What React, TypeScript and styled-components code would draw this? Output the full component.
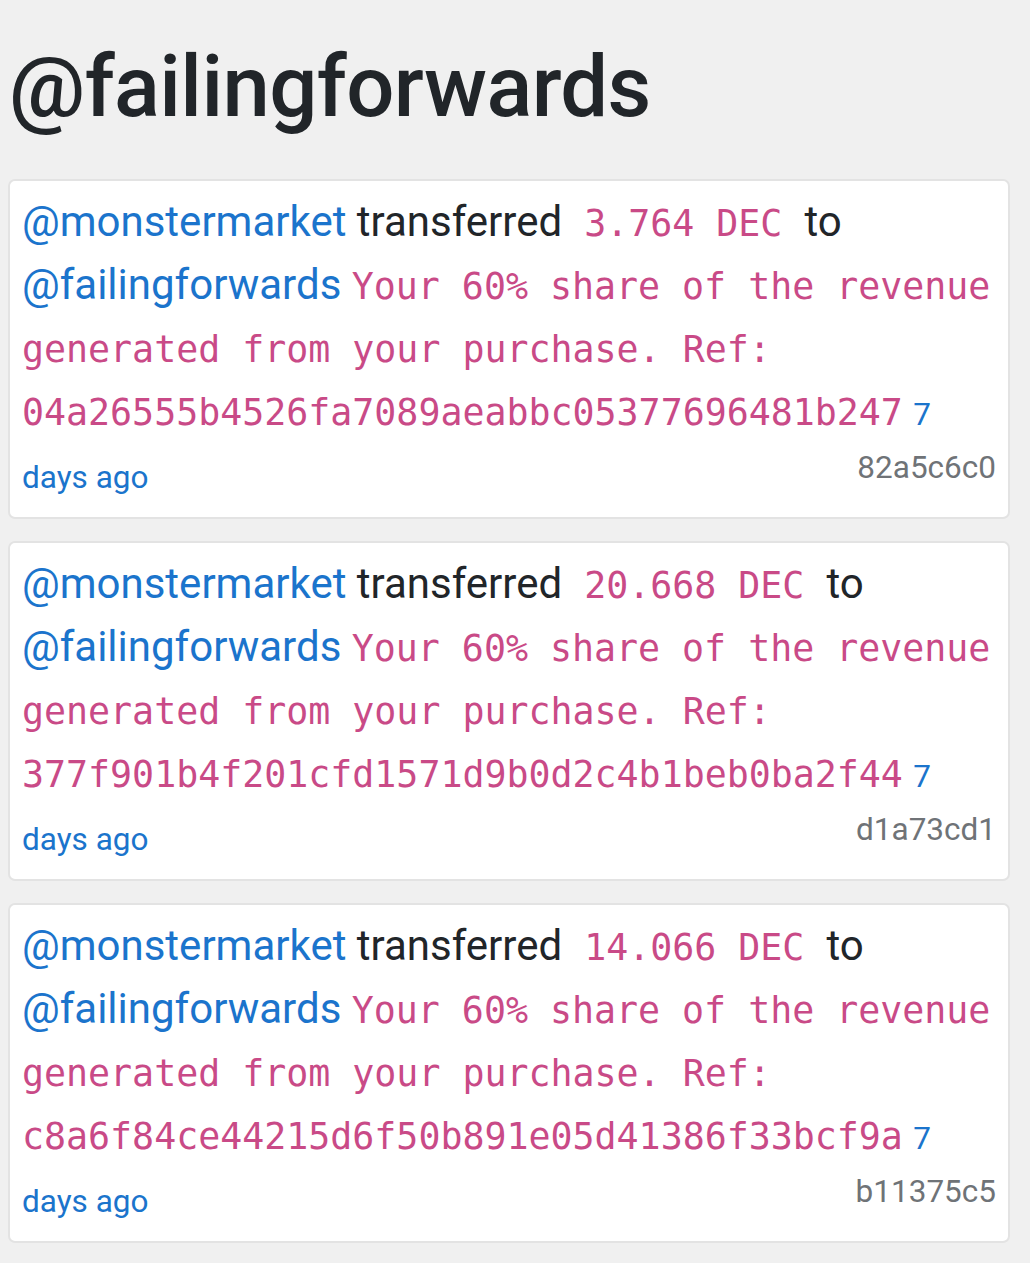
import React from "react";
import styled, { createGlobalStyle } from "styled-components";

const Global = createGlobalStyle`
  html, body { margin: 0; padding: 0; background: #f0f0f0; }
  body {
    font-family: Roboto, "Liberation Sans", sans-serif;
    font-size: 42px;
    line-height: 1.5;
    color: #212529;
  }
`;

const Page = styled.main`
  padding: 0 20px 20px 8px;
`;

const Title = styled.h1`
  margin: 36px 0 41px 1px;
  font-size: 85px;
  font-weight: 500;
  line-height: 1.2;
  color: #212529;
  letter-spacing: -0.6px;
`;

const List = styled.div`
  display: flex;
  flex-direction: column;
  gap: 22px;
`;

const Card = styled.div`
  background: #fff;
  border: 2px solid #e3e3e3;
  border-radius: 7px;
  padding: 9px 12px 12px 12px;
`;

const Body = styled.p`
  margin: 0;
`;

const Link = styled.a<{ $small?: boolean }>`
  color: #1b74cc;
  text-decoration: none;
  font-size: ${(p) => (p.$small ? "31.5px" : "inherit")};
`;

const Code = styled.code`
  font-family: "DejaVu Sans Mono", "Liberation Mono", monospace;
  font-size: 36.6px;
  color: #c94a87;
  white-space: pre-wrap;
`;

const Hash = styled.span`
  float: right;
  font-size: 31.5px;
  color: #6f7377;
  margin-top: 2px;
`;

type Tx = { amount: string; ref: string; id: string };

const txs: Tx[] = [
  { amount: "3.764", ref: "04a26555b4526fa7089aeabbc05377696481b247", id: "82a5c6c0" },
  { amount: "20.668", ref: "377f901b4f201cfd1571d9b0d2c4b1beb0ba2f44", id: "d1a73cd1" },
  { amount: "14.066", ref: "c8a6f84ce44215d6f50b891e05d41386f33bcf9a", id: "b11375c5" },
];

export default function App() {
  return (
    <>
      <Global />
      <Page>
        <Title>@failingforwards</Title>
        <List>
          {txs.map((t) => (
            <Card key={t.id}>
              <Body>
                <Link href="#">@monstermarket</Link> transferred<Code>{` ${t.amount} DEC `}</Code>to{" "}
                <Link href="#">@failingforwards</Link>{" "}
                <Code>{`Your 60% share of the revenue generated from your purchase. Ref: ${t.ref}`}</Code>{" "}
                <Link href="#" $small>7 days ago</Link>
                <Hash>{t.id}</Hash>
              </Body>
            </Card>
          ))}
        </List>
      </Page>
    </>
  );
}
